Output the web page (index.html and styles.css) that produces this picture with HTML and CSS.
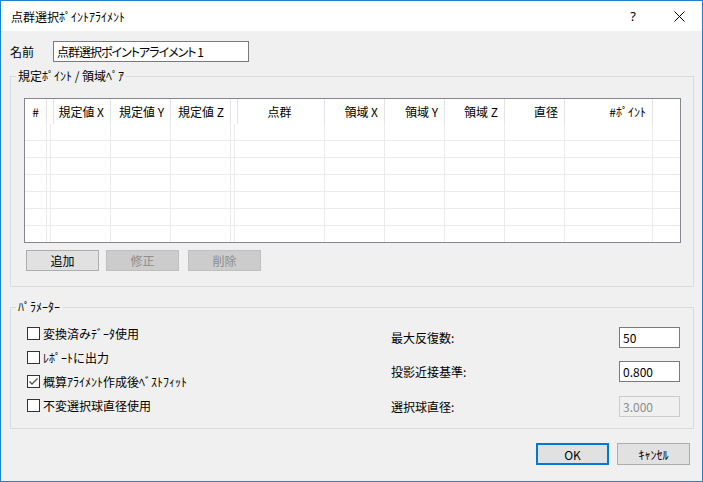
FILE: index.html
```html
<!DOCTYPE html>
<html lang="ja">
<head>
    <meta charset="UTF-8">
    <title>点群選択ポイントアライメント</title>
    <link rel="stylesheet" href="styles.css">
</head>
<body>
<div class="window">
    <div class="titlebar">
        <span class="title">点群選択ﾎﾟｲﾝﾄｱﾗｲﾒﾝﾄ</span>
        <span class="caption-btn help">?</span>
        <span class="caption-btn close">
            <svg width="11" height="11" viewBox="0 0 11 11"><path d="M0.5 0.5 L10.5 10.5 M10.5 0.5 L0.5 10.5" stroke="#000" stroke-width="1" fill="none"/></svg>
        </span>
    </div>
    <div class="content">
        <div class="name-row">
            <label class="name-label" for="name">名前</label>
            <input class="textbox name-box" type="text" id="name" value="点群選択ポイントアライメント 1">
        </div>

        <fieldset class="group pairs">
            <legend>規定ﾎﾟｲﾝﾄ / 領域ﾍﾟｱ</legend>
            <div class="grid">
                <div class="grid-head">
                    <span class="c-num">#</span>
                    <span></span>
                    <span>規定値 X</span>
                    <span>規定値 Y</span>
                    <span>規定値 Z</span>
                    <span></span>
                    <span class="c-center">点群</span>
                    <span>領域 X</span>
                    <span>領域 Y</span>
                    <span>領域 Z</span>
                    <span>直径</span>
                    <span>#ﾎﾟｲﾝﾄ</span>
                    <span></span>
                </div>
                <!--空の行は背景の横線で描く-->
                <div class="grid-body">
                    <span></span><span></span><span></span><span></span><span></span><span></span><span></span>
                    <span></span><span></span><span></span><span></span><span></span><span></span>
                </div>
            </div>
            <div class="grid-buttons">
                <button class="button small add">追加</button>
                <button class="button small edit" disabled>修正</button>
                <button class="button small" disabled>削除</button>
            </div>
        </fieldset>

        <fieldset class="group params">
            <legend>ﾊﾟﾗﾒｰﾀｰ</legend>
            <div class="params-body">
                <div class="options">
                    <label class="option"><span class="checkbox"></span>変換済みﾃﾞｰﾀ使用</label>
                    <label class="option"><span class="checkbox"></span>ﾚﾎﾟｰﾄに出力</label>
                    <label class="option"><span class="checkbox">
                        <svg width="11" height="11" viewBox="0 0 11 11"><path d="M1.5 5.5 L4 8 L9.5 2.5" stroke="#555" stroke-width="1.4" fill="none"/></svg>
                    </span>概算ｱﾗｲﾒﾝﾄ作成後ﾍﾞｽﾄﾌｨｯﾄ</label>
                    <label class="option"><span class="checkbox"></span>不変選択球直径使用</label>
                </div>
                <div class="values">
                    <span>最大反復数:</span>
                    <input class="textbox value-box" type="text" value="50">
                    <span>投影近接基準:</span>
                    <input class="textbox value-box" type="text" value="0.800">
                    <span>選択球直径:</span>
                    <input class="textbox value-box" type="text" value="3.000" disabled>
                </div>
            </div>
        </fieldset>

        <div class="dialog-buttons">
            <button class="button default">OK</button>
            <button class="button">ｷｬﾝｾﾙ</button>
        </div>
    </div>
</div>
</body>
</html>
```

FILE: styles.css
```css
* {
    margin: 0;
    padding: 0;
    box-sizing: border-box;
}

body {
    font: 12px "Noto Sans CJK JP", "Noto Sans", sans-serif;
    color: #000;
    background: #fff;
}

.window {
    width: 703px;
    height: 482px;
    border: 1px solid #1883d7;
    background: #f0f0f0;
}

.titlebar {
    display: flex;
    align-items: center;
    height: 30px;
    background: #fff;
}

.title {
    flex: 1;
    padding-left: 10px;
}

.caption-btn {
    display: flex;
    align-items: center;
    justify-content: center;
    width: 46px;
    height: 30px;
}

.help {
    font: 13px "Noto Sans", sans-serif;
}

.content {
    padding: 10px 8px 0 9px;
}

.name-row {
    display: flex;
    align-items: center;
    height: 21px;
}

.name-label {
    width: 43px;
}

.textbox {
    height: 21px;
    padding: 0 3px;
    border: 1px solid #7a7a7a;
    background: #fff;
    font: inherit;
    color: #000;
    outline: none;
}

.name-box {
    width: 196px;
    /*カナを詰めて元の UI フォントの幅に近づける*/
    font-feature-settings: "palt";
    letter-spacing: -1px;
}

.group {
    min-width: 0;
    border: 1px solid #dcdcdc;
}

.group legend {
    padding: 0 2px;
    line-height: 14px;
}

.pairs {
    margin-top: 7px;
    padding: 15px 12px 15px 13px;
}

.pairs legend {
    margin-left: -8px;
}

/* 一覧表 */
.grid {
    width: 657px;
    height: 145px;
    border: 1px solid #828790;
    background: #fff;
    overflow: hidden;
}

.grid-head,
.grid-body {
    display: grid;
    grid-template-columns: 22px 4px 60px 60px 60px 4px 90px 60px 60px 60px 60px 88px 1fr;
}

.grid-head {
    height: 25px;
}

.grid-head span {
    padding-right: 6px;
    border-right: 1px solid #e5e5e5;
    line-height: 25px;
    text-align: right;
    white-space: nowrap;
}

.grid-head .c-num,
.grid-head .c-center {
    padding: 0;
    text-align: center;
}

.grid-body {
    height: 118px;
    /*17px ごとの横罫線*/
    background: repeating-linear-gradient(to bottom, transparent 0, transparent 16px, #ebebeb 16px, #ebebeb 17px);
}

.grid-body span {
    border-right: 1px solid #ebebeb;
}

.grid-head span:last-child,
.grid-body span:last-child {
    border-right: none;
}

.grid-buttons {
    display: flex;
    margin-top: 7px;
    padding-left: 2px;
}

.button {
    width: 73px;
    height: 22px;
    border: 1px solid #adadad;
    background: #e1e1e1;
    font: inherit;
    color: #000;
}

.button.small {
    height: 21px;
}

.button:disabled {
    border-color: #bfbfbf;
    background: #cccccc;
    color: #8d8d8d;
}

.add {
    margin-right: 7px;
}

.edit {
    margin-right: 9px;
}

/* パラメーター */
.params {
    margin-top: 13px;
    padding: 0 13px 11px 16px;
}

.params legend {
    margin-left: -11px;
}

.params-body {
    display: flex;
}

.options {
    flex: 1;
    padding-top: 7px;
}

.option {
    display: flex;
    align-items: center;
    height: 24px;
}

.checkbox {
    display: flex;
    align-items: center;
    justify-content: center;
    width: 13px;
    height: 13px;
    margin-right: 3px;
    border: 1px solid #333;
    background: #fff;
}

.values {
    display: grid;
    grid-template-columns: 228px 61px;
    row-gap: 13px;
    align-items: center;
    margin-top: 13px;
}

.value-box {
    width: 61px;
}

.value-box:disabled {
    border-color: #cccccc;
    background: #f0f0f0;
    color: #8d8d8d;
}

.dialog-buttons {
    display: flex;
    justify-content: flex-end;
    gap: 8px;
    margin-top: 14px;
    padding-right: 4px;
}

.button.default {
    border: 2px solid #0078d7;
}
```
